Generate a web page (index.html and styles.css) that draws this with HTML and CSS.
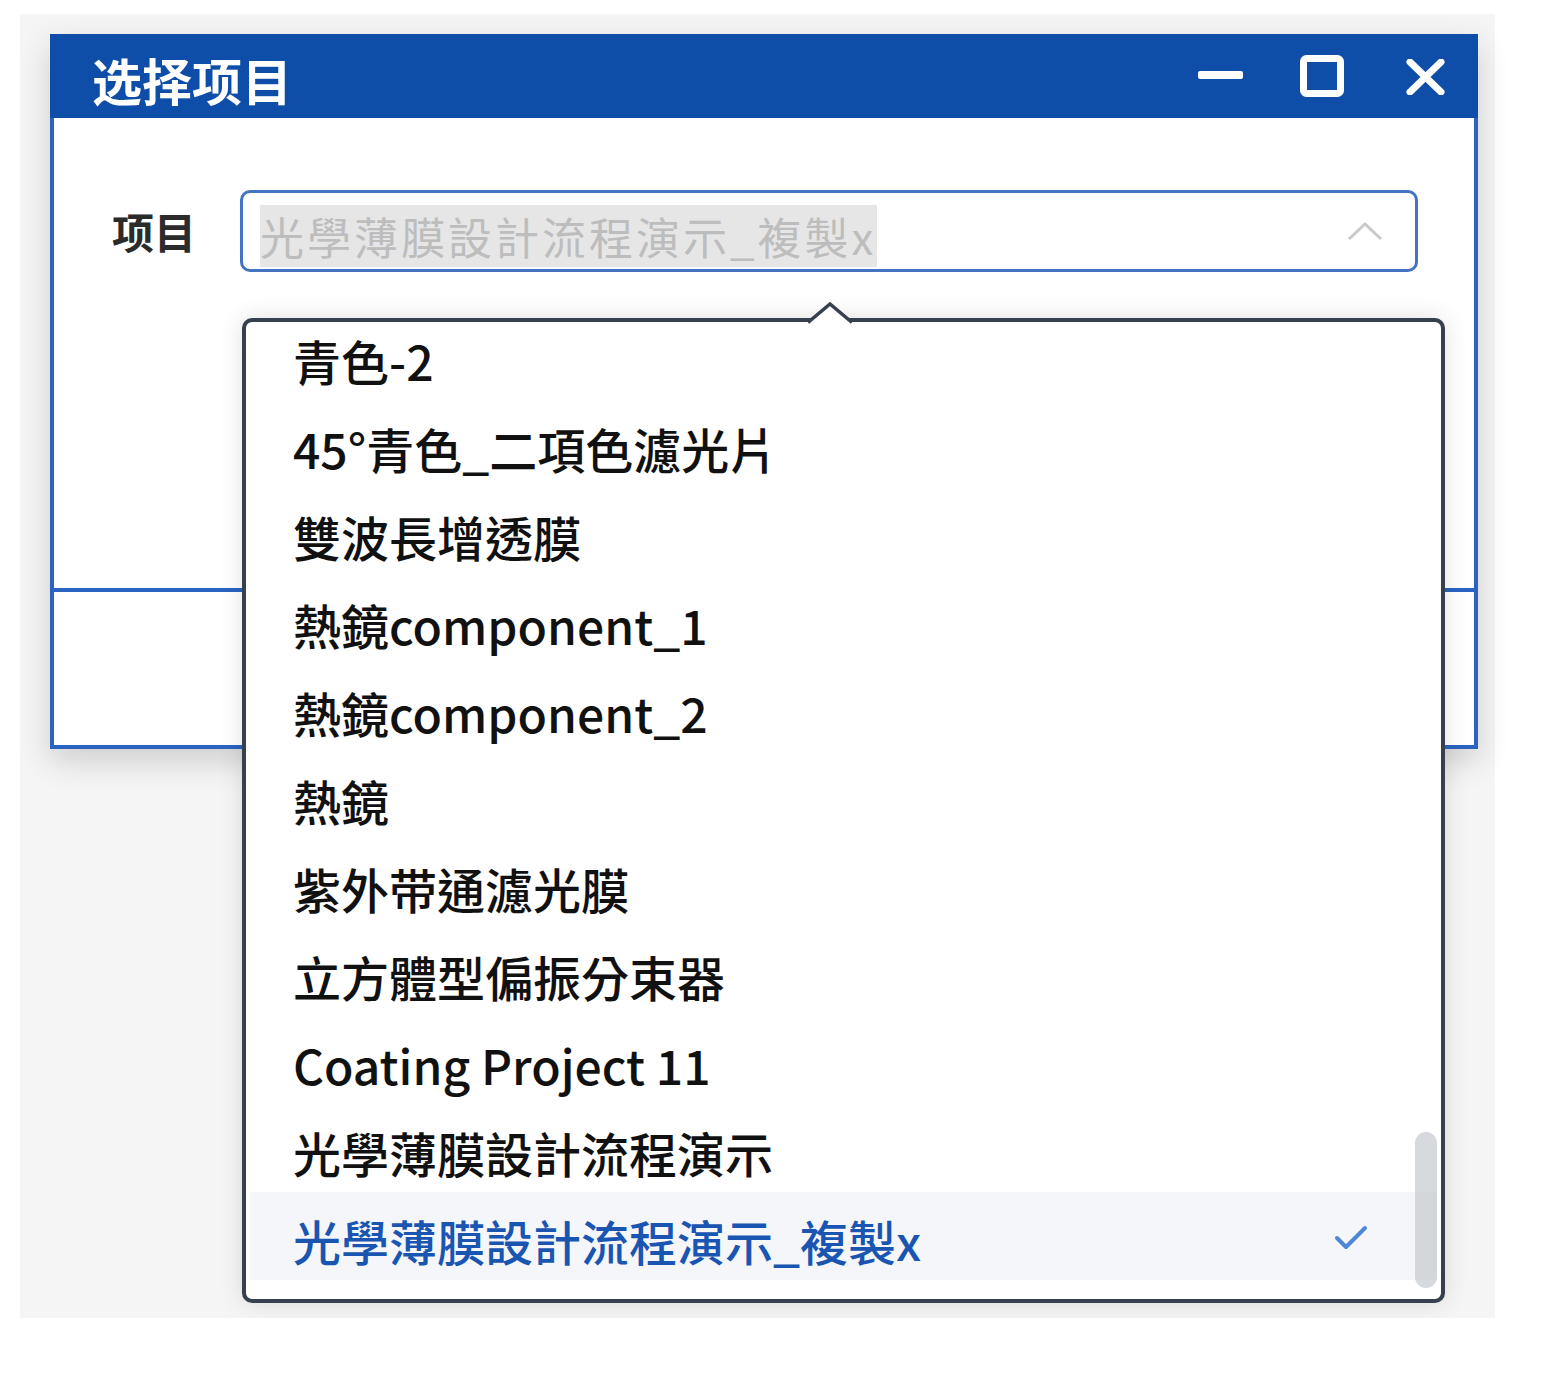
FILE: index.html
```html
<!DOCTYPE html>
<html>
<head>
    <meta charset="UTF-8">
    <title>选择项目</title>
    <link rel="stylesheet" href="styles.css">
</head>
<body>
    <div class="stage">
        <div class="window">
            <!-- Titelleiste -->
            <div class="titlebar">
                <span class="title">选择项目</span>
                <div class="controls">
                    <svg class="ctl ctl-min" width="45" height="8" viewBox="0 0 45 8">
                        <rect x="0" y="0" width="45" height="8" rx="2" fill="#fff"/>
                    </svg>
                    <svg class="ctl ctl-max" width="44" height="42" viewBox="0 0 44 42">
                        <rect x="3.5" y="3.5" width="37" height="35" rx="3" fill="none" stroke="#fff" stroke-width="7"/>
                    </svg>
                    <svg class="ctl ctl-close" width="39" height="36" viewBox="0 0 39 36">
                        <path d="M4 3 L35 33 M35 3 L4 33" stroke="#fff" stroke-width="7" stroke-linecap="round"/>
                    </svg>
                </div>
            </div>

            <div class="window-body">
                <div class="field">
                    <span class="field-label">项目</span>
                    <div class="select">
                        <div class="select-box">
                            <span class="select-value">光學薄膜設計流程演示_複製x</span>
                            <svg class="select-arrow" width="36" height="20" viewBox="0 0 36 20">
                                <polyline points="2,18 18,3 34,18" fill="none" stroke="#c9c9c9" stroke-width="3"/>
                            </svg>
                        </div>

                        <!-- Dropdown -->
                        <div class="dropdown">
                            <svg class="dropdown-caret" width="44" height="24" viewBox="0 0 44 24">
                                <polygon points="0,24 0,20.5 22,2 44,20.5 44,24" fill="#fff"/>
                                <polyline points="0,20.5 22,2 44,20.5" fill="none" stroke="#37404e" stroke-width="3.5"/>
                            </svg>
                            <div class="dropdown-scroll">
                                <ul class="options">
                                    <li class="option">青色-2</li>
                                    <li class="option">45°青色_二項色濾光片</li>
                                    <li class="option">雙波長增透膜</li>
                                    <li class="option">熱鏡component_1</li>
                                    <li class="option">熱鏡component_2</li>
                                    <li class="option">熱鏡</li>
                                    <li class="option">紫外带通濾光膜</li>
                                    <li class="option">立方體型偏振分束器</li>
                                    <li class="option">Coating Project 11</li>
                                    <li class="option">光學薄膜設計流程演示</li>
                                    <li class="option selected">
                                        光學薄膜設計流程演示_複製x
                                        <svg class="check" width="34" height="26" viewBox="0 0 34 26">
                                            <polyline points="3,14 12,23 31,4" fill="none" stroke="#4f87d7" stroke-width="4" stroke-linecap="round" stroke-linejoin="round"/>
                                        </svg>
                                    </li>
                                </ul>
                                <div class="scrollbar"></div>
                            </div>
                        </div>
                    </div>
                </div>
            </div>

            <div class="window-footer"></div>
        </div>
    </div>
</body>
</html>
```

FILE: styles.css
```css
body {
    margin: 0;
    padding: 0;
    background-color: #fff;
    font-family: "Noto Sans CJK TC", "Noto Sans CJK SC", sans-serif;
    color: #111;
}

.stage {
    margin: 14px 0 0 20px;
    width: 1475px;
    height: 1304px;
    padding: 20px 0 0 30px;
    box-sizing: border-box;
    background-color: #f5f5f5;
}

.window {
    width: 1428px;
    background-color: #fff;
    box-shadow: 0 12px 30px rgba(0, 0, 0, 0.16);
}

.titlebar {
    height: 84px;
    background-color: #0f4ea8;
    display: flex;
    align-items: center;
    padding: 0 33px 0 42px;
    box-sizing: border-box;
}

.title {
    font-family: "Noto Sans CJK SC", sans-serif;
    font-weight: 700;
    font-size: 50px;
    line-height: 1;
    color: #fff;
    padding-top: 6px;
}

.controls {
    margin-left: auto;
    display: flex;
    align-items: center;
}

.ctl { display: block; }
.ctl-min { margin-right: 57px; margin-top: -2px; }
.ctl-max { margin-right: 62px; }
.ctl-close { margin-top: 2px; }

.window-body {
    height: 470px;
    border-left: 4px solid #2a63c2;
    border-right: 4px solid #2a63c2;
    padding: 72px 56px 0 58px;
    box-sizing: border-box;
}

.window-footer {
    height: 161px;
    border: 4px solid #2a63c2;
    box-sizing: border-box;
}

.field {
    display: flex;
    align-items: center;
}

.field-label {
    width: 128px;
    font-family: "Noto Sans CJK SC", sans-serif;
    font-weight: 700;
    font-size: 42px;
    line-height: 1;
    color: #2b2b2b;
}

.select {
    position: relative;
    width: 1178px;
}

.select-box {
    height: 82px;
    border: 3px solid #4473c3;
    border-radius: 10px;
    display: flex;
    align-items: flex-start;
    padding: 12px 32px 0 17px;
    box-sizing: border-box;
}

.select-value {
    background-color: #e6e6e6;
    color: #bdbdbd;
    font-size: 44px;
    letter-spacing: 3px;
    line-height: 62px;
    height: 62px;
}

.select-arrow {
    margin-left: auto;
    margin-top: 16px;
}

.dropdown {
    position: absolute;
    left: 2px;
    top: 128px;
    width: 1203px;
    height: 985px;
    border: 4px solid #37404e;
    border-radius: 10px;
    background-color: #fff;
    box-shadow: 0 0 24px rgba(0, 0, 0, 0.12);
    box-sizing: border-box;
    z-index: 2;
}

.dropdown-caret {
    position: absolute;
    top: -20px;
    left: 562px;
    display: block;
}

.dropdown-scroll {
    position: relative;
    height: 100%;
    overflow: hidden;
    padding: 0 4px;
    border-radius: 7px;
}

.options {
    list-style: none;
    margin: -10px 0 0 0;
    padding: 0;
}

.option {
    height: 88px;
    padding: 8px 69px 0 43px;
    box-sizing: border-box;
    display: flex;
    align-items: center;
    font-size: 48px;
    font-weight: 500;
    white-space: nowrap;
}

.option.selected {
    background-color: #f4f6fa;
    color: #1a55b2;
}

.check {
    margin-left: auto;
    margin-top: -6px;
}

.scrollbar {
    position: absolute;
    top: 810px;
    right: 4px;
    width: 22px;
    height: 156px;
    border-radius: 11px;
    background-color: rgba(200, 204, 210, 0.75);
}
```
